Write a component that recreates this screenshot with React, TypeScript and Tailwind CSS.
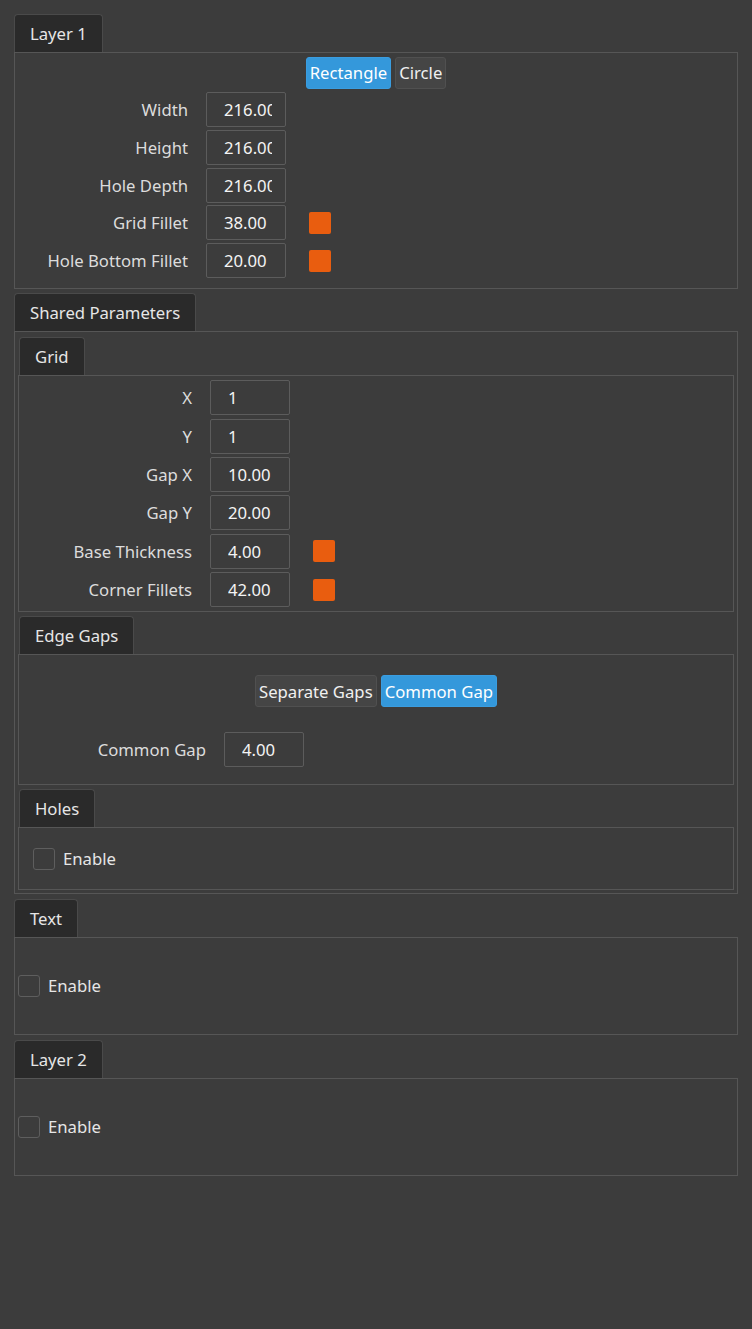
import { ReactNode } from "react";

type Field = { label: string; value: string; color?: boolean };

const font = { fontFamily: '"Noto Sans", "Open Sans", sans-serif' };

function Tab({ title, children, className = "" }: { title: string; children: ReactNode; className?: string }) {
  return (
    <div className={className}>
      <div className="flex">
        <div className="h-[38px] px-[15px] flex items-center rounded-t-[4px] border border-b-0 border-[#4a4a4a] bg-[#2a2a2a] text-[#e6e6e6]">
          {title}
        </div>
      </div>
      {children}
    </div>
  );
}

function Panel({ children, className = "" }: { children: ReactNode; className?: string }) {
  return <div className={`border border-[#565656] ${className}`}>{children}</div>;
}

function ValueBox({ value }: { value: string }) {
  return (
    <div className="w-[80px] h-[35px] border border-[#5c5c5c] rounded-[2px] pl-[17px] flex items-center text-[#f4f4f4]">
      <div className="w-[48px] overflow-hidden whitespace-nowrap">{value}</div>
    </div>
  );
}

function FormRows({ fields, labelWidth, gap }: { fields: Field[]; labelWidth: number; gap: number }) {
  return (
    <div className="flex flex-col" style={{ rowGap: gap }}>
      {fields.map((f) => (
        <div key={f.label} className="flex items-center">
          <div className="text-right text-[#dcdcdc] pr-[18px]" style={{ width: labelWidth }}>
            {f.label}
          </div>
          <ValueBox value={f.value} />
          {f.color && <div className="ml-[23px] w-[22px] h-[22px] rounded-[2px] bg-[#e95d0f]" />}
        </div>
      ))}
    </div>
  );
}

function Toggle({ options, active }: { options: string[]; active: string }) {
  return (
    <div className="flex justify-center gap-[4px]">
      {options.map((o) => (
        <div
          key={o}
          className={
            o === active
              ? "h-[32px] px-[3px] flex items-center rounded-[3px] bg-[#3498db] border border-[#3a9de0] text-white"
              : "h-[32px] px-[3px] flex items-center rounded-[3px] bg-[#454545] border border-[#505050] text-[#f0f0f0]"
          }
        >
          {o}
        </div>
      ))}
    </div>
  );
}

function Checkbox({ label }: { label: string }) {
  return (
    <div className="h-[22px] flex items-center gap-[8px]">
      <div className="w-[22px] h-[22px] rounded-[3px] border border-[#5e5e5e]" />
      <span className="text-[#e6e6e6] leading-[22px]">{label}</span>
    </div>
  );
}

const layer1: Field[] = [
  { label: "Width", value: "216.00" },
  { label: "Height", value: "216.00" },
  { label: "Hole Depth", value: "216.00" },
  { label: "Grid Fillet", value: "38.00", color: true },
  { label: "Hole Bottom Fillet", value: "20.00", color: true },
];

const grid: Field[] = [
  { label: "X", value: "1" },
  { label: "Y", value: "1" },
  { label: "Gap X", value: "10.00" },
  { label: "Gap Y", value: "20.00" },
  { label: "Base Thickness", value: "4.00", color: true },
  { label: "Corner Fillets", value: "42.00", color: true },
];

export default function App() {
  return (
    <div className="min-h-[1329px] w-[752px] bg-[#3c3c3c] text-[16.7px] pt-[14px] pl-[14px] pr-[14px]" style={font}>
      <Tab title="Layer 1">
        <Panel className="pt-[4px] pb-[10px]">
          <Toggle options={["Rectangle", "Circle"]} active="Rectangle" />
          <div className="mt-[3px]">
            <FormRows fields={layer1} labelWidth={191} gap={2.8} />
          </div>
        </Panel>
      </Tab>

      <Tab title="Shared Parameters" className="mt-[4px]">
        <Panel className="px-[3px] pt-[5px] pb-[3px]">
          <Tab title="Grid" className="ml-[1px]">
            <Panel className="-ml-[1px] pt-[4px] pb-[4px]">
              <FormRows fields={grid} labelWidth={191} gap={3.4} />
            </Panel>
          </Tab>

          <Tab title="Edge Gaps" className="mt-[4px] ml-[1px]">
            <Panel className="-ml-[1px] pt-[20px] pb-[17px]">
              <Toggle options={["Separate Gaps", "Common Gap"]} active="Common Gap" />
              <div className="mt-[25px]">
                <FormRows fields={[{ label: "Common Gap", value: "4.00" }]} labelWidth={205} gap={3} />
              </div>
            </Panel>
          </Tab>

          <Tab title="Holes" className="mt-[4px] ml-[1px]">
            <Panel className="-ml-[1px] pl-[14px] py-[19.5px]">
              <Checkbox label="Enable" />
            </Panel>
          </Tab>
        </Panel>
      </Tab>

      <Tab title="Text" className="mt-[5px]">
        <Panel className="pl-[3px] h-[98px] flex items-center">
          <Checkbox label="Enable" />
        </Panel>
      </Tab>

      <Tab title="Layer 2" className="mt-[5px]">
        <Panel className="pl-[3px] h-[98px] flex items-center">
          <Checkbox label="Enable" />
        </Panel>
      </Tab>
    </div>
  );
}
